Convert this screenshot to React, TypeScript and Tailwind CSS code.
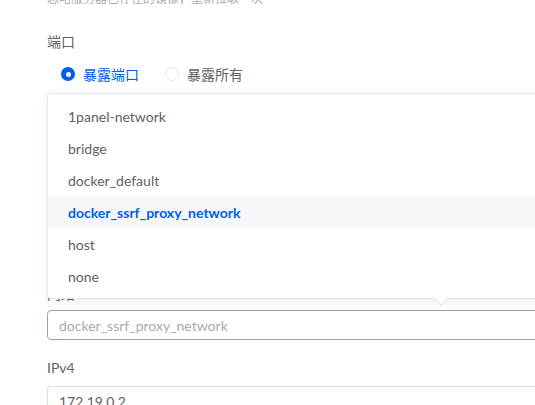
import React from 'react';

const font = { fontFamily: 'Lato, "Noto Sans CJK SC", sans-serif' };

const networks = ['1panel-network', 'bridge', 'docker_default', 'docker_ssrf_proxy_network', 'host', 'none'];

const App: React.FC = () => {
    const selected = 'docker_ssrf_proxy_network';

    return (
        <div className="relative h-[405px] w-[535px] overflow-hidden bg-white" style={font}>
            <div className="-mt-[10px] w-[620px] pl-[47px]">
                {/* help text of the previous item, scrolled mostly out of view */}
                <p className="text-[12px] leading-[18px] text-[#a8abb2]">忽略服务器已存在的镜像，重新拉取一次</p>

                {/* 端口 */}
                <div className="mt-[18px] text-[14px] leading-[32px] text-[#606266]">端口</div>
                <div className="flex h-[32px] items-center pl-[14px]">
                    <label className="flex items-center gap-[8px]">
                        <span className="flex h-[14px] w-[14px] items-center justify-center rounded-full bg-[#005eeb]">
                            <span className="h-[5px] w-[5px] rounded-full bg-white" />
                        </span>
                        <span className="text-[14px] text-[#005eeb]">暴露端口</span>
                    </label>
                    <label className="ml-[26px] flex items-center gap-[8px]">
                        <span className="h-[14px] w-[14px] rounded-full border border-[#e4e7ed] bg-white" />
                        <span className="text-[14px] text-[#606266]">暴露所有</span>
                    </label>
                </div>

                <div className="h-[188px]" />

                {/* 网络 */}
                <div className="text-[14px] leading-[32px] text-[#606266]">网络</div>
                <div className="flex h-[30px] items-center rounded-[4px] border border-[#8fa6c0] px-[11px]">
                    <span className="text-[14px] text-[#a8abb2]">{selected}</span>
                </div>

                {/* IPv4 */}
                <div className="mt-[12px] text-[14px] leading-[32px] text-[#606266]">IPv4</div>
                <div className="mt-[2px] flex h-[31px] items-center rounded-[4px] border border-[#dcdfe6] px-[11px]">
                    <span className="text-[14px] text-[#606266]">172.19.0.2</span>
                </div>
            </div>

            {/* select dropdown, opened above the input */}
            <div className="absolute left-[47px] top-[93px] w-[560px] rounded-[4px] border border-[#e4e7ed] bg-white py-[6px] shadow-[0_2px_12px_rgba(0,0,0,0.08)]">
                {networks.map(n => (
                    <div
                        key={n}
                        className={
                            n === selected
                                ? 'flex h-[32px] items-center bg-[#f5f7fa] px-[20px] text-[14px] font-bold text-[#005eeb]'
                                : 'flex h-[32px] items-center px-[20px] text-[14px] text-[#606266]'
                        }
                    >
                        {n}
                    </div>
                ))}
                <span className="absolute -bottom-[6px] left-[388px] h-[10px] w-[10px] rotate-45 border-b border-r border-[#e4e7ed] bg-white" />
            </div>
        </div>
    );
};

export default App;
